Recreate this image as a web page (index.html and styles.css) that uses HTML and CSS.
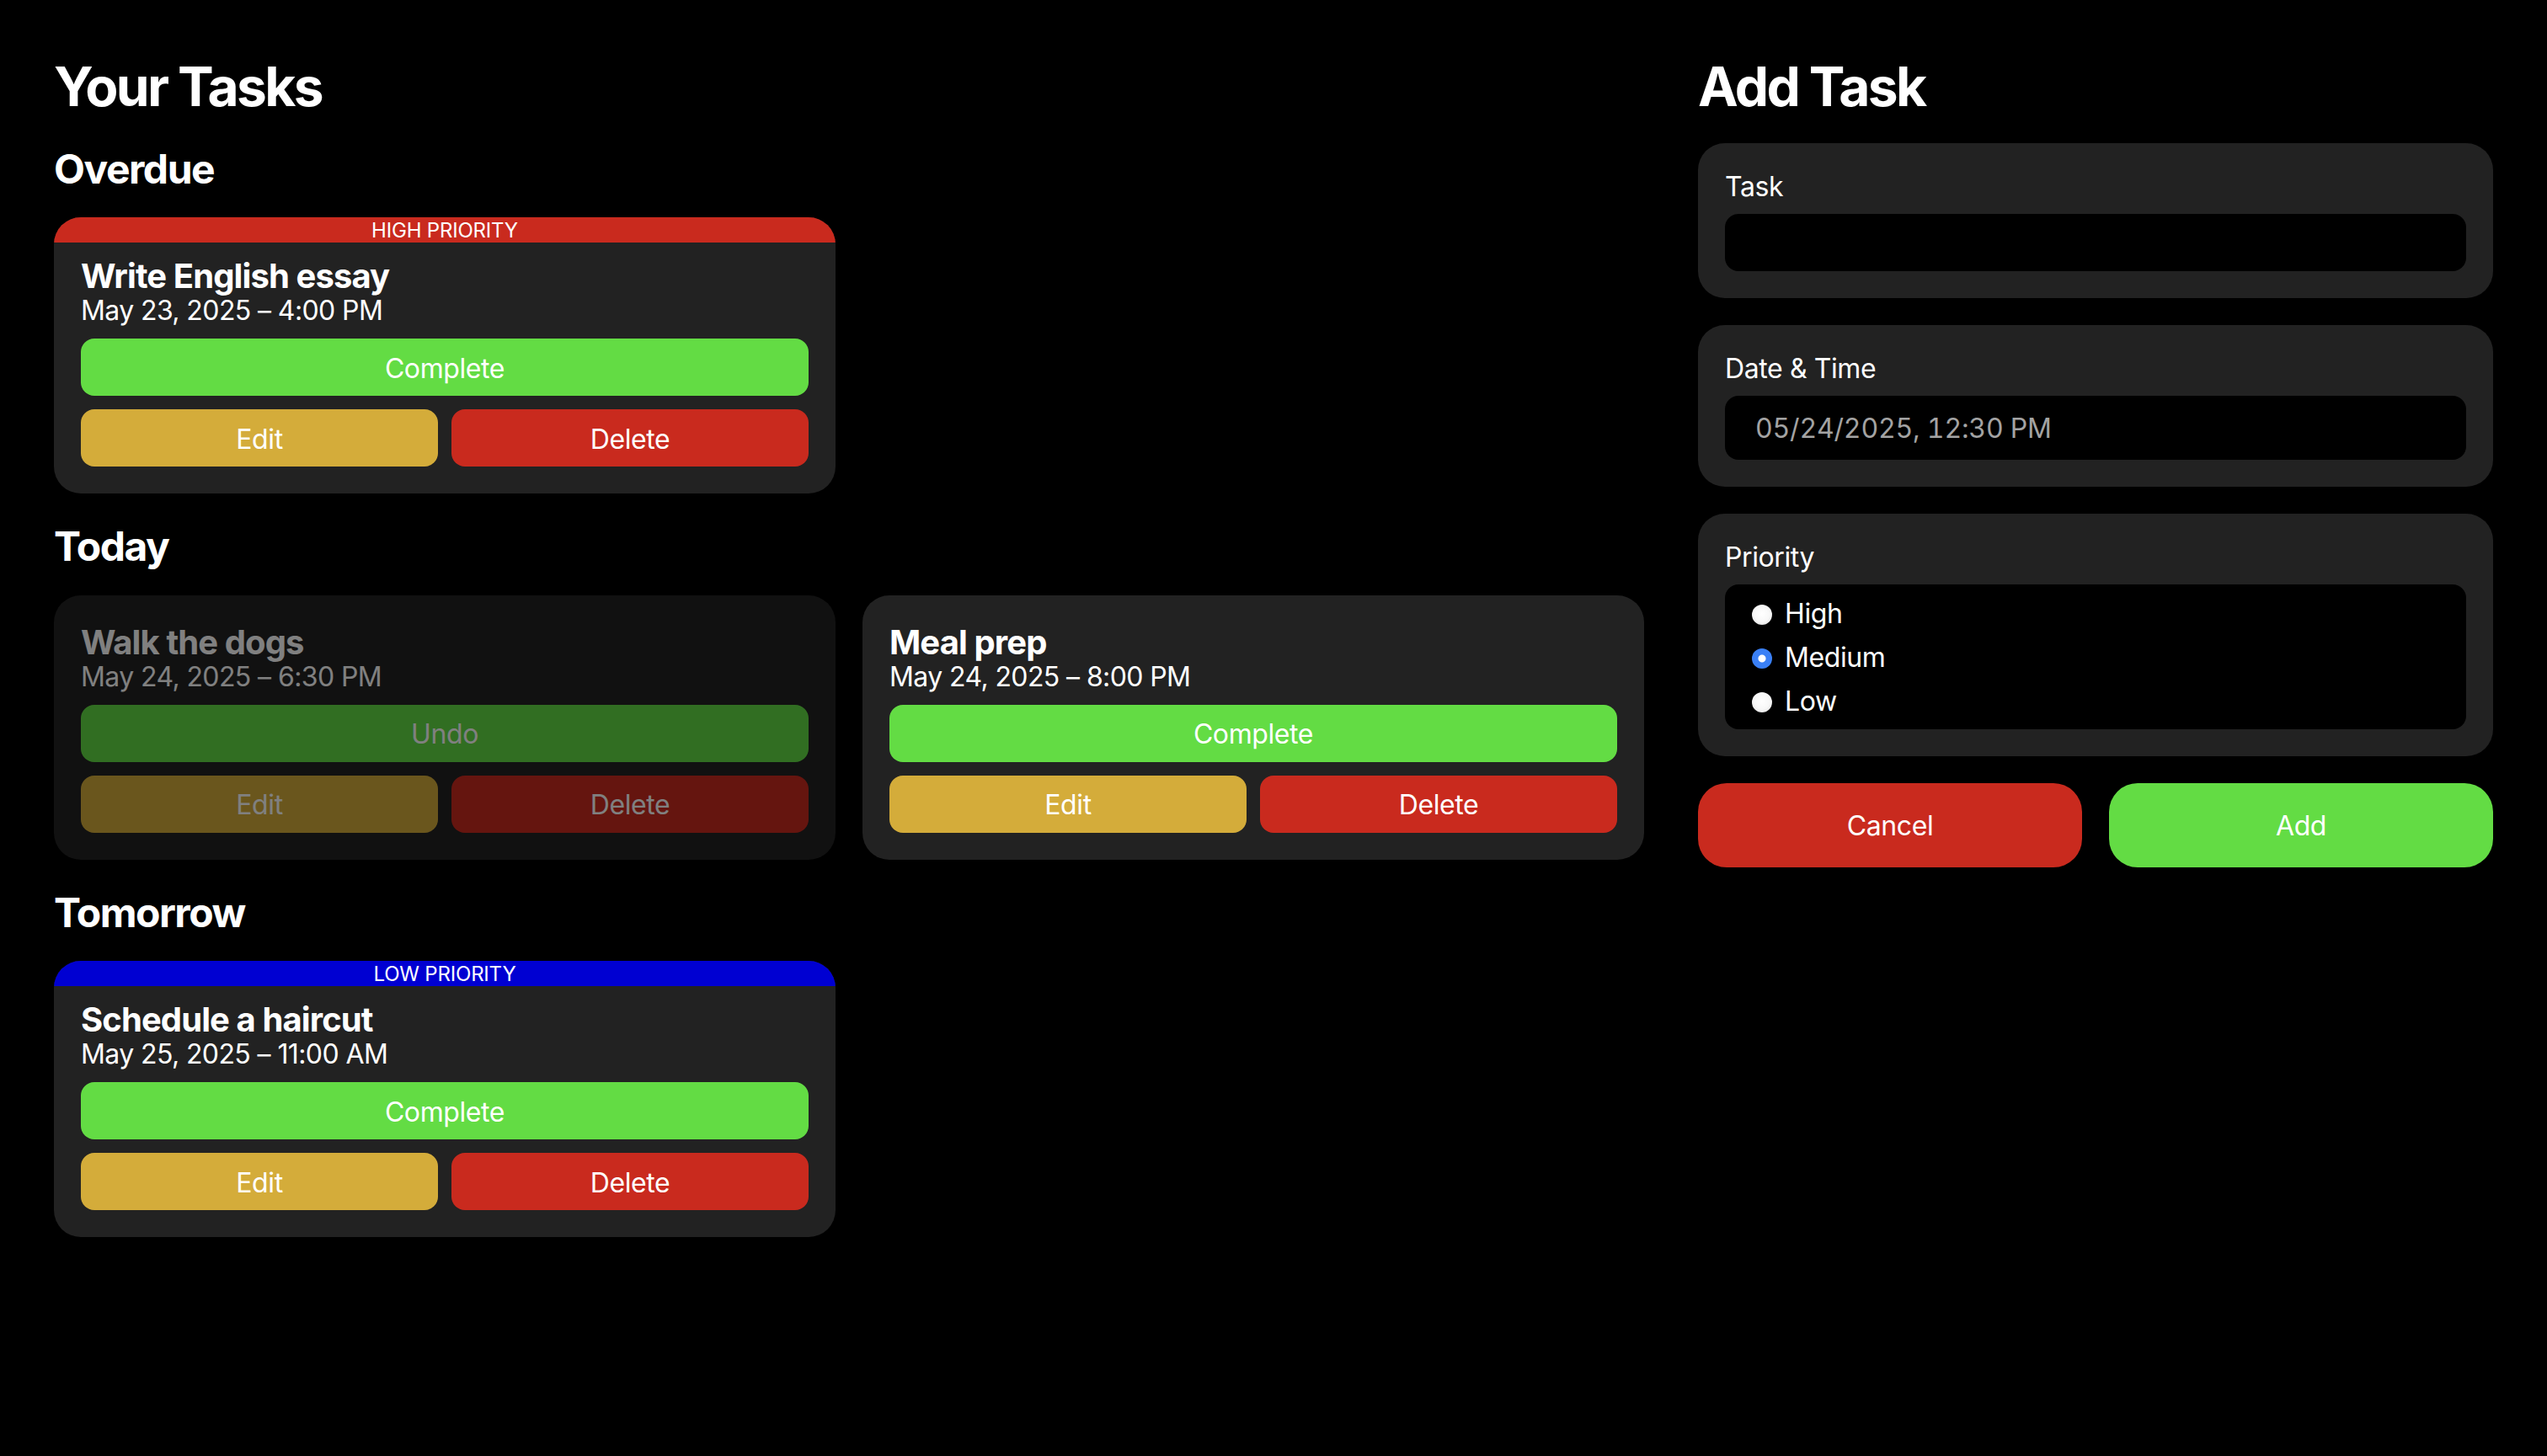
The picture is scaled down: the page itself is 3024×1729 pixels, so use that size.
FILE: index.html
```html
<!DOCTYPE html>
<html lang="en">
<head>
<meta charset="utf-8">
<title>Tasks</title>
<link rel="stylesheet" href="styles.css">
</head>
<body>
<main class="app">
  <section class="tasks">
    <h1 class="page-title">Your Tasks</h1>

    <div class="group">
      <h2 class="group-title">Overdue</h2>
      <div class="card-grid">
        <article class="card">
          <div class="banner banner-high">HIGH PRIORITY</div>
          <h3 class="card-title">Write English essay</h3>
          <p class="card-date">May 23, 2025 – 4:00 PM</p>
          <div class="actions">
            <button class="btn btn-complete">Complete</button>
            <div class="row">
              <button class="btn btn-edit">Edit</button>
              <button class="btn btn-delete">Delete</button>
            </div>
          </div>
        </article>
      </div>
    </div>

    <div class="group">
      <h2 class="group-title">Today</h2>
      <div class="card-grid">
        <article class="card card-done">
          <h3 class="card-title">Walk the dogs</h3>
          <p class="card-date">May 24, 2025 – 6:30 PM</p>
          <div class="actions">
            <button class="btn btn-complete">Undo</button>
            <div class="row">
              <button class="btn btn-edit">Edit</button>
              <button class="btn btn-delete">Delete</button>
            </div>
          </div>
        </article>
        <article class="card">
          <h3 class="card-title">Meal prep</h3>
          <p class="card-date">May 24, 2025 – 8:00 PM</p>
          <div class="actions">
            <button class="btn btn-complete">Complete</button>
            <div class="row">
              <button class="btn btn-edit">Edit</button>
              <button class="btn btn-delete">Delete</button>
            </div>
          </div>
        </article>
      </div>
    </div>

    <div class="group">
      <h2 class="group-title">Tomorrow</h2>
      <div class="card-grid">
        <article class="card">
          <div class="banner banner-low">LOW PRIORITY</div>
          <h3 class="card-title">Schedule a haircut</h3>
          <p class="card-date">May 25, 2025 – 11:00 AM</p>
          <div class="actions">
            <button class="btn btn-complete">Complete</button>
            <div class="row">
              <button class="btn btn-edit">Edit</button>
              <button class="btn btn-delete">Delete</button>
            </div>
          </div>
        </article>
      </div>
    </div>
  </section>

  <aside class="add">
    <h1 class="page-title">Add Task</h1>
    <form class="form">
      <div class="field">
        <label class="field-label" for="task">Task</label>
        <input class="input" id="task" type="text">
      </div>
      <div class="field">
        <label class="field-label" for="when">Date &amp; Time</label>
        <input class="input input-date" id="when" type="text" value="05/24/2025, 12:30 PM">
      </div>
      <div class="field">
        <span class="field-label">Priority</span>
        <div class="options">
          <label class="option"><input class="radio" type="radio" name="priority"><span>High</span></label>
          <label class="option"><input class="radio" type="radio" name="priority" checked><span>Medium</span></label>
          <label class="option"><input class="radio" type="radio" name="priority"><span>Low</span></label>
        </div>
      </div>
      <div class="form-actions">
        <button type="button" class="big-btn btn-delete">Cancel</button>
        <button type="button" class="big-btn btn-complete">Add</button>
      </div>
    </form>
  </aside>
</main>
</body>
</html>
```

FILE: styles.css
```css
* { box-sizing: border-box; }

html, body {
  margin: 0;
  background: #000;
  color: #fff;
  font-family: Inter, "Liberation Sans", sans-serif;
}

body { padding: 66px 64px 64px; }

.app {
  display: grid;
  grid-template-columns: 2fr 1fr;
  gap: 64px;
  align-items: start;
}

.page-title {
  margin: 0 0 30px;
  font-size: 64px;
  line-height: 1.15;
  font-weight: 700;
  letter-spacing: -2.6px;
}

.tasks {
  display: flex;
  flex-direction: column;
}

.group { margin-bottom: 32px; }

.group-title {
  margin: 0 0 29px;
  padding-top: 2px;
  font-size: 48px;
  line-height: 1.2;
  font-weight: 700;
  letter-spacing: -1.5px;
}

.card-grid {
  display: grid;
  grid-template-columns: 1fr 1fr;
  gap: 32px;
}

.card {
  background: #222;
  border-radius: 32px;
  padding: 32px;
  overflow: hidden;
}

.card-done { opacity: 0.5; }

.banner {
  margin: -32px -32px 16px;
  height: 30px;
  line-height: 31px;
  text-align: center;
  font-size: 24px;
  letter-spacing: -0.2px;
}

.banner-high { background: #c92a1e; }
.banner-low { background: #0000d2; }

.card-title {
  margin: 0;
  font-size: 40px;
  line-height: 48px;
  font-weight: 700;
  letter-spacing: -0.9px;
}

.card-date {
  margin: 0 0 16px;
  font-size: 32px;
  line-height: 34px;
  letter-spacing: -0.6px;
}

.actions {
  display: flex;
  flex-direction: column;
  gap: 16px;
}

.row {
  display: grid;
  grid-template-columns: 1fr 1fr;
  gap: 16px;
}

.btn, .big-btn {
  border: none;
  color: #fff;
  font-family: inherit;
  font-size: 32px;
  letter-spacing: -0.4px;
  padding: 2px 0 0;
}

.btn {
  height: 68px;
  border-radius: 16px;
}

.btn-complete { background: #63dc44; }
.btn-edit { background: #d4ac3a; }
.btn-delete { background: #c92a1e; }

.form {
  display: flex;
  flex-direction: column;
  gap: 32px;
}

.field {
  background: #222;
  border-radius: 32px;
  padding: 32px;
  display: flex;
  flex-direction: column;
}

.field-label {
  display: block;
  font-size: 32px;
  line-height: 36px;
  padding-top: 2px;
  margin-bottom: 14px;
  letter-spacing: -0.4px;
}

.input {
  display: block;
  width: 100%;
  height: 68px;
  border: none;
  outline: none;
  background: #000;
  border-radius: 16px;
  color: #fff;
  font-family: inherit;
  font-size: 32px;
  padding: 0 24px;
}

.input-date {
  height: 76px;
  padding: 2px 36px 0;
  color: #a3a3a3;
  font-variant-numeric: tabular-nums;
  letter-spacing: -0.2px;
}

.options {
  background: #000;
  border-radius: 16px;
  padding: 8px 32px;
  display: flex;
  flex-direction: column;
}

.option {
  height: 52px;
  display: flex;
  align-items: center;
  font-size: 32px;
  letter-spacing: -0.4px;
  padding-top: 2px;
}

.radio {
  appearance: none;
  -webkit-appearance: none;
  width: 24px;
  height: 24px;
  margin: 2px 15px 0 0;
  border-radius: 50%;
  background: radial-gradient(circle at 50% 45%, #ffffff 0, #f7f7f7 55%, #cfcfcf 100%);
  flex: none;
}

.radio:checked {
  background: radial-gradient(circle, #ffffff 0 4px, #3a80f6 5px);
}

.form-actions {
  display: grid;
  grid-template-columns: 1fr 1fr;
  gap: 32px;
}

.big-btn {
  height: 100px;
  border-radius: 34px;
}
```
